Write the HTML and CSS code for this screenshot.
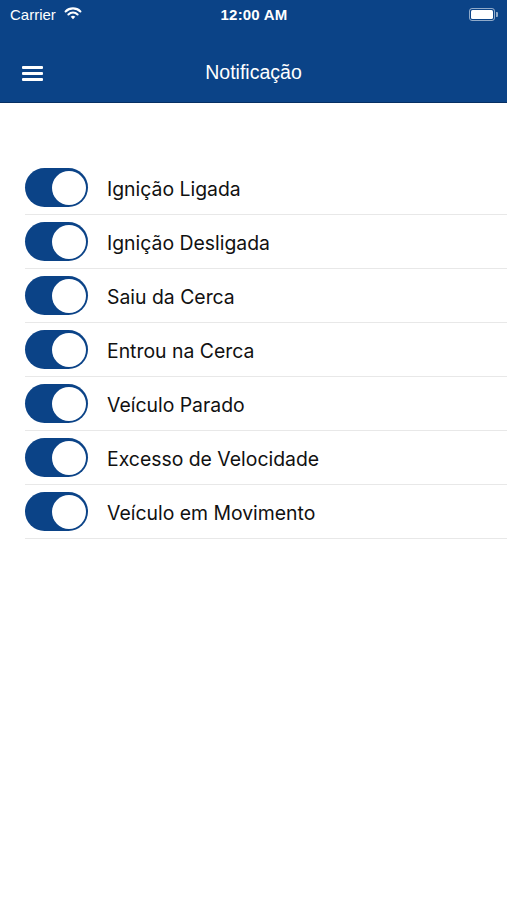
FILE: index.html
```html
<!DOCTYPE html>
<html lang="pt">
<head>
    <meta charset="UTF-8">
    <meta name="viewport" content="width=device-width, initial-scale=1.0">
    <title>Notificação</title>
    <link rel="stylesheet" href="styles.css">
</head>
<body>
    <header class="top">
        <div class="status">
            <div class="status-left">
                <span>Carrier</span>
                <svg class="wifi" width="18" height="14" viewBox="0 0 18 14">
                    <path d="M9 13.2 L11.3 10.8 A3.3 3.3 0 0 0 6.7 10.8 Z" fill="#fff"/>
                    <path d="M4.4 8.4 A6.6 6.6 0 0 1 13.6 8.4" fill="none" stroke="#fff" stroke-width="2.1" stroke-linecap="round"/>
                    <path d="M1.6 5.4 A10.6 10.6 0 0 1 16.4 5.4" fill="none" stroke="#fff" stroke-width="2.1" stroke-linecap="round"/>
                </svg>
            </div>
            <div class="status-time">12:00 AM</div>
            <div class="status-right">
                <span class="battery"><span class="battery-fill"></span></span>
                <span class="battery-tip"></span>
            </div>
        </div>
        <div class="navbar">
            <button class="menu" aria-label="Menu">
                <span></span><span></span><span></span>
            </button>
            <h1>Notificação</h1>
        </div>
    </header>

    <ul class="list">
        <li class="row"><span class="switch on"></span><span class="label">Ignição Ligada</span></li>
        <li class="row"><span class="switch on"></span><span class="label">Ignição Desligada</span></li>
        <li class="row"><span class="switch on"></span><span class="label">Saiu da Cerca</span></li>
        <li class="row"><span class="switch on"></span><span class="label">Entrou na Cerca</span></li>
        <li class="row"><span class="switch on"></span><span class="label">Veículo Parado</span></li>
        <li class="row"><span class="switch on"></span><span class="label">Excesso de Velocidade</span></li>
        <li class="row"><span class="switch on"></span><span class="label">Veículo em Movimento</span></li>
    </ul>
</body>
</html>
```

FILE: styles.css
```css
body {
    margin: 0;
    font-family: "Liberation Sans", Arial, sans-serif;
    background: #fff;
    color: #111;
}
.top {
    background: #0b4387;
    color: #fff;
    height: 102px;
    border-bottom: 1px solid #062f63;
}
.status {
    height: 28px;
    display: grid;
    grid-template-columns: 1fr auto 1fr;
    align-items: center;
    padding: 0 9px 0 10px;
}
.status-left {
    display: flex;
    align-items: center;
    gap: 8px;
    font-size: 15px;
}
.wifi {
    margin-top: -2px;
}
.status-time {
    font-size: 15px;
    font-weight: bold;
    letter-spacing: 0.2px;
}
.status-right {
    display: flex;
    justify-content: flex-end;
    align-items: center;
}
.battery {
    width: 22px;
    height: 9px;
    border: 1.5px solid rgba(255,255,255,0.55);
    border-radius: 3px;
    padding: 1px;
}
.battery-fill {
    display: block;
    height: 100%;
    background: #fff;
    border-radius: 1.5px;
}
.battery-tip {
    width: 2px;
    height: 5px;
    margin-left: 1px;
    background: rgba(255,255,255,0.55);
    border-radius: 0 1px 1px 0;
}
.navbar {
    height: 74px;
    display: flex;
    align-items: center;
    justify-content: center;
    position: relative;
}
.navbar h1 {
    margin: 14px 0 0;
    font-size: 19.5px;
    font-weight: normal;
}
.menu {
    position: absolute;
    left: 22px;
    top: 38px;
    width: 21px;
    padding: 0;
    border: 0;
    background: none;
    display: flex;
    flex-direction: column;
    gap: 3.5px;
}
.menu span {
    display: block;
    height: 2.5px;
    background: #fff;
    border-radius: 1px;
}
.list {
    list-style: none;
    margin: 58px 0 0 25px;
    padding: 0;
}
.row {
    height: 53px;
    display: flex;
    align-items: center;
    border-bottom: 1px solid #e8e8e8;
}
.switch {
    width: 63px;
    height: 39px;
    border-radius: 20px;
    background: #0b4387;
    position: relative;
    flex-shrink: 0;
}
.switch::after {
    content: "";
    position: absolute;
    top: 2.5px;
    right: 2.5px;
    width: 34px;
    height: 34px;
    border-radius: 50%;
    background: #fff;
}
.label {
    margin-left: 19px;
    padding-top: 2px;
    font-family: Inter, "Liberation Sans", sans-serif;
    font-size: 19.4px;
}
```
